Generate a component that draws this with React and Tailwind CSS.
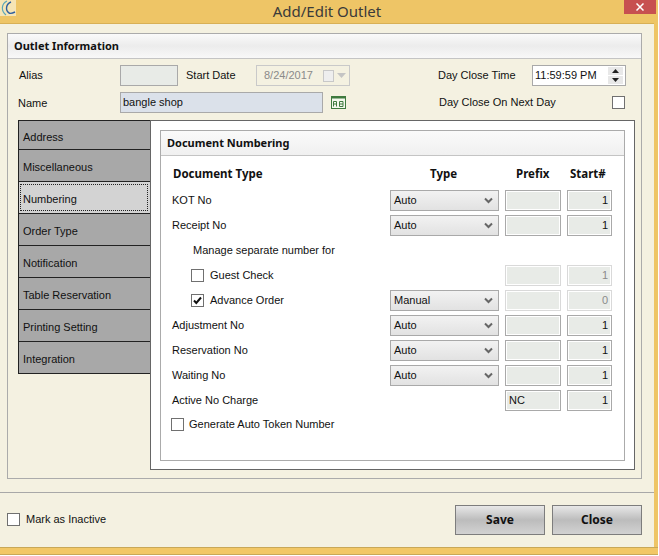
const tabs = ["Address", "Miscellaneous", "Numbering", "Order Type", "Notification", "Table Reservation", "Printing Setting", "Integration"];

function Check({ checked, className = "" }) {
  return (
    <span className={`flex h-[13px] w-[13px] shrink-0 items-center justify-center border border-[#707070] bg-white ${className}`}>
      {checked && (
        <svg width="11" height="11" viewBox="0 0 11 11">
          <path d="M2 5.5 L4.3 8 L9 2.5" fill="none" stroke="#111" strokeWidth="2" />
        </svg>
      )}
    </span>
  );
}

function Select({ value }) {
  return (
    <div className="flex h-[21px] w-[109px] items-center justify-between border border-[#a9a9a9] bg-gradient-to-b from-[#f2f2f2] to-[#e2e2e2] pl-[3px] pr-[5px]">
      <span>{value}</span>
      <svg width="9" height="7" viewBox="0 0 9 7">
        <path d="M1 1.5 L4.5 5 L8 1.5" fill="none" stroke="#666" strokeWidth="2" />
      </svg>
    </div>
  );
}

function Box({ value, faded, align = "right", width = "w-[45px]" }) {
  const border = faded ? "border-[#d9d9d9]" : "border-[#a9a9a9]";
  const text = faded ? "text-[#8a8a8a]" : "text-[#111]";
  const side = align === "right" ? "justify-end" : "justify-start";
  return (
    <div className={`${width} ${border} ${text} ${side} flex h-[21px] items-center border-[1px] bg-[#e8ebe7] px-[3px] outline outline-1 -outline-offset-2 outline-white`}>
      {value}
    </div>
  );
}

function Row({ label, type, prefix, start, faded, indent, checked, hasCheck }) {
  return (
    <div className="flex h-[21px] items-center">
      <div className="flex w-[218px] items-center" style={{ paddingLeft: indent }}>
        {hasCheck && <Check checked={checked} className="mr-[6px]" />}
        <span>{label}</span>
      </div>
      <div className="w-[115px]">{type && <Select value={type} />}</div>
      <div className="w-[62px]">
        <Box faded={faded} value={prefix} align="left" width="w-[56px]" />
      </div>
      <Box faded={faded} value={start} />
    </div>
  );
}

const boldFont = "font-['Noto_Sans',sans-serif] font-bold";

export default function App() {
  return (
    <div className="relative h-[556px] w-[659px] overflow-hidden bg-white font-['Liberation_Sans',sans-serif] text-[11px] leading-none text-[#111]">
      <div className="h-[547px] border-r-[4px] border-[#eec566] bg-[#f4f1e1]" style={{ width: 658 }}>
        <div className="relative flex h-[24px] items-center justify-center border-b border-[#d8b055] bg-[#eec566] font-['Noto_Sans',sans-serif] text-[15px] text-[#3a3a3a]">
          <svg className="absolute left-0 top-0" width="16" height="16" viewBox="0 0 16 16">
            <rect width="16" height="16" fill="#f6e5b5" />
            <path d="M7 1 C1 4 1 11 6 15" fill="none" stroke="#5aa6b8" strokeWidth="1.2" />
            <path d="M11 2 C6 4 5 10 9 13 C11 14 13 13 15 12" fill="none" stroke="#2f5f9e" strokeWidth="1.4" />
          </svg>
          Add/Edit Outlet
          <div className="absolute right-[-2px] top-0 flex h-[14px] w-[32px] items-center justify-center bg-[#c75050] text-white">
            <svg width="8" height="8" viewBox="0 0 8 8">
              <path d="M0.5 0.5 L7.5 7.5 M7.5 0.5 L0.5 7.5" stroke="#fff" strokeWidth="1.5" />
            </svg>
          </div>
        </div>

        <div className="px-[7px] pt-[9px]">
          <div className="h-[446px] w-[635px] border border-[#ababab]">
            <div className={`flex h-[25px] items-center border-b border-[#c4c4c4] bg-gradient-to-b from-[#fafafa] via-[#ececec] to-[#f8f8f8] pb-[2px] pl-[6px] ${boldFont}`}>
              Outlet Information
            </div>

            <div className="mt-[6px] flex h-[21px] items-center pl-[11px]">
              <span className="w-[101px]">Alias</span>
              <div className="h-[21px] w-[58px] border border-[#a9a9a9] bg-[#e8ebe7]" />
              <span className="ml-[8px] w-[70px]">Start Date</span>
              <div className="flex h-[21px] w-[94px] items-center border border-[#c9c9c9] pl-[7px] text-[#8a8a8a]">
                <span className="flex-1">8/24/2017</span>
                <span className="h-[12px] w-[11px] border border-[#c8c8c8] bg-[#eeeeee]" />
                <svg className="ml-[3px] mr-[3px]" width="9" height="5" viewBox="0 0 9 5"><path d="M0 0 H9 L4.5 5 Z" fill="#c4c4c4" /></svg>
              </div>
              <span className="ml-[88px] w-[94px]">Day Close Time</span>
              <div className="flex h-[21px] w-[94px] items-center justify-between border border-[#a9a9a9] bg-white pl-[2px] pr-[2px]">
                <span>11:59:59 PM</span>
                <div className="flex flex-col gap-[1px]">
                  <div className="flex h-[8px] w-[15px] items-center justify-center bg-[#e8e8e8]"><svg width="7" height="4" viewBox="0 0 7 4"><path d="M3.5 0 L7 4 H0 Z" fill="#222" /></svg></div>
                  <div className="flex h-[8px] w-[15px] items-center justify-center bg-[#e8e8e8]"><svg width="7" height="4" viewBox="0 0 7 4"><path d="M0 0 H7 L3.5 4 Z" fill="#222" /></svg></div>
                </div>
              </div>
            </div>

            <div className="mt-[6px] flex h-[21px] items-center pl-[10px]">
              <span className="w-[102px] pt-[2px]">Name</span>
              <div className="flex h-[21px] w-[203px] items-center border border-[#a9a9a9] bg-[#dbe1ea] pl-[2px]">bangle shop</div>
              <svg className="ml-[8px]" width="15" height="13" viewBox="0 0 15 13">
                <rect x="0.5" y="0.5" width="14" height="12" fill="#f4f8ee" stroke="#3f7a3f" />
                <rect x="0" y="0" width="15" height="2.5" fill="#3f7a3f" />
                <path d="M2.5 10.5 V5.5 H5.5 V10.5 M2.5 8 H5.5 M8.5 5.5 H12 V10.5 H8.5 Z M8.5 8 H12" fill="none" stroke="#3f7a3f" />
              </svg>
              <span className="ml-[93px] flex-1">Day Close On Next Day</span>
              <Check className="mr-[16px]" />
            </div>

            <div className="ml-[10px] mt-[7px] flex">
              <div className="h-[254px] w-[132px] border-l border-t border-[#222] bg-[#a8a8a8]">
                {tabs.map((t, i) => (
                  <div key={t} className={`flex h-[32px] items-center border-b border-[#222] first:h-[29px] ${i === 2 ? "bg-[#d3d3d3] pl-[1px]" : "pl-[4px] pt-[4px]"}`}>
                    {i === 2 ? (
                      <span className="flex h-[27px] w-[128px] items-center border border-dotted border-[#222] pl-[2px] pt-[4px]">{t}</span>
                    ) : t}
                  </div>
                ))}
              </div>
              <div className="h-[350px] w-[485px] border border-[#666] bg-white p-[9px]">
                <div className="h-[331px] w-[465px] border border-[#ababab]">
                  <div className={`flex h-[25px] items-center border-b border-[#c4c4c4] bg-gradient-to-b from-[#fafafa] to-[#f0f0f0] pb-[1px] pl-[6px] ${boldFont}`}>
                    Document Numbering
                  </div>
                  <div className="pl-[11px] pt-[11px]">
                    <div className={`flex h-[14px] items-center text-[11.5px] ${boldFont}`}>
                      <span className="w-[258px] pl-[1px]">Document Type</span>
                      <span className="w-[86px]">Type</span>
                      <span className="w-[54px]">Prefix</span>
                      <span>Start#</span>
                    </div>
                    <div className="mt-[9px] flex flex-col gap-[4px]">
                      <Row label="KOT No" type="Auto" start="1" />
                      <Row label="Receipt No" type="Auto" start="1" />
                      <div className="flex h-[21px] items-center pl-[21px]">Manage separate number for</div>
                      <Row label="Guest Check" hasCheck indent={19} start="1" faded />
                      <Row label="Advance Order" hasCheck checked indent={19} type="Manual" start="0" faded />
                      <Row label="Adjustment No" type="Auto" start="1" />
                      <Row label="Reservation No" type="Auto" start="1" />
                      <Row label="Waiting No" type="Auto" start="1" />
                      <Row label="Active No Charge" prefix="NC" start="1" />
                    </div>
                    <div className="mt-[6px] flex h-[14px] items-center">
                      <Check className="mr-[5px] -ml-[1px]" />
                      <span>Generate Auto Token Number</span>
                    </div>
                  </div>
                </div>
              </div>
            </div>
          </div>
        </div>

        <div className="mt-[13px] flex h-[54px] items-center border-t border-[#a8a8a8] pl-[7px] pr-[12px]">
          <Check className="mr-[6px]" />
          <span className="flex-1">Mark as Inactive</span>
          <button className={`h-[30px] w-[90px] border border-[#7d7d7d] bg-gradient-to-b from-[#e8e8e8] via-[#bcbcbc] to-[#d2d2d2] text-[12px] ${boldFont}`}>Save</button>
          <button className={`ml-[7px] h-[30px] w-[90px] border border-[#7d7d7d] bg-gradient-to-b from-[#e8e8e8] via-[#bcbcbc] to-[#d2d2d2] text-[12px] ${boldFont}`}>Close</button>
        </div>
      </div>
      <div className="h-[8px] w-[658px] border-y border-[#c8a858] bg-[#f2c766]" />
    </div>
  );
}
